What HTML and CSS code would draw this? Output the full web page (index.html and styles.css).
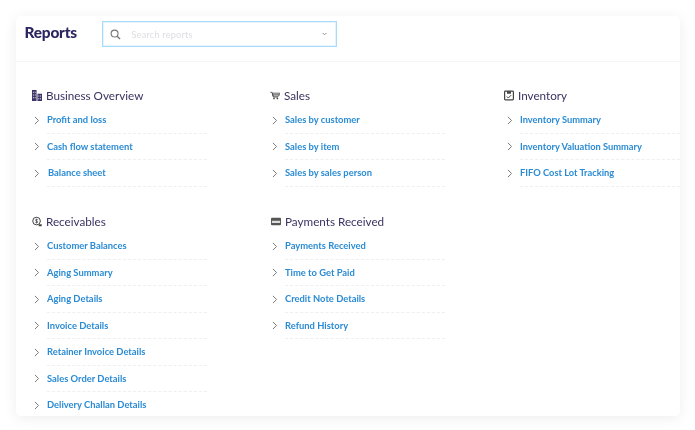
FILE: index.html
```html
<!DOCTYPE html>
<html lang="en">
<head>
<meta charset="utf-8">
<title>Reports</title>
<link rel="stylesheet" href="styles.css">
</head>
<body>
<svg class="defs" width="0" height="0" aria-hidden="true">
  <symbol id="chev" viewBox="0 0 6 10"><path d="M1 1l4 4-4 4" fill="none" stroke="#777" stroke-width="1.1"/></symbol>
</svg>
<main class="card">
  <header class="top">
    <h1 class="title">Reports</h1>
    <div class="search">
      <svg class="search-icon" viewBox="0 0 12 12"><circle cx="5" cy="5" r="3.8" fill="none" stroke="#777" stroke-width="1.2"/><path d="M7.8 7.8L11 11" stroke="#777" stroke-width="1.5"/></svg>
      <span class="placeholder">Search reports</span>
      <svg class="caret" viewBox="0 0 6 4"><path d="M.7.7L3 3l2.3-2.3" fill="none" stroke="#888" stroke-width="1.1"/></svg>
    </div>
  </header>
  <div class="grid">
    <section class="group">
      <h2 class="head">
        <svg class="ico" viewBox="0 0 11 12"><path fill="#3c3566" d="M0 0h5v12H0zM6 4h5v8H6z"/><path fill="#fff" d="M1 2h1v1H1zM3 2h1v1H3zM1 5h1v1H1zM3 5h1v1H3zM1 8h1v1H1zM3 8h1v1H3zM7 6h1v1H7zM9 6h1v1H9zM7 9h1v1H7zM9 9h1v1H9z"/></svg>
        Business Overview
      </h2>
      <ul class="rows">
        <li class="row"><svg class="chev"><use href="#chev"/></svg><a class="link">Profit and loss</a></li>
        <li class="row"><svg class="chev"><use href="#chev"/></svg><a class="link">Cash flow statement</a></li>
        <li class="row"><svg class="chev"><use href="#chev"/></svg><a class="link link-shift">Balance sheet</a></li>
      </ul>
    </section>
    <section class="group">
      <h2 class="head">
        <svg class="ico" viewBox="0 0 12 10"><path d="M.5 1.2h2l1.4 5.6h5.7" fill="none" stroke="#444" stroke-width="1"/><path d="M2.8 2.2h8.7l-.9 3.4H3.6z" fill="none" stroke="#444" stroke-width="1"/><path d="M3.4 3.9h7.5" stroke="#444" stroke-width=".8"/><circle cx="4.8" cy="8.5" r="1" fill="#444"/><circle cx="8.9" cy="8.5" r="1" fill="#444"/></svg>
        Sales
      </h2>
      <ul class="rows">
        <li class="row"><svg class="chev"><use href="#chev"/></svg><a class="link">Sales by customer</a></li>
        <li class="row"><svg class="chev"><use href="#chev"/></svg><a class="link">Sales by item</a></li>
        <li class="row"><svg class="chev"><use href="#chev"/></svg><a class="link">Sales by sales person</a></li>
      </ul>
    </section>
    <section class="group group-last">
      <h2 class="head">
        <svg class="ico" viewBox="0 0 10 10"><rect x=".6" y=".6" width="8.8" height="8.8" rx=".8" fill="none" stroke="#444" stroke-width="1.2"/><path d="M3 .8h4v2.4H3z" fill="#444"/><path d="M2.8 6l1.5 1.5 2.9-2.9" fill="none" stroke="#444" stroke-width="1"/></svg>
        Inventory
      </h2>
      <ul class="rows">
        <li class="row"><svg class="chev"><use href="#chev"/></svg><a class="link">Inventory Summary</a></li>
        <li class="row"><svg class="chev"><use href="#chev"/></svg><a class="link">Inventory Valuation Summary</a></li>
        <li class="row"><svg class="chev"><use href="#chev"/></svg><a class="link">FIFO Cost Lot Tracking</a></li>
      </ul>
    </section>
    <section class="group">
      <h2 class="head">
        <svg class="ico" viewBox="0 0 11 11"><circle cx="5" cy="5" r="4.2" fill="none" stroke="#444" stroke-width="1.1"/><path d="M5 2.4v5.2M6.4 3.6C5.6 3 3.8 3.1 3.8 4.1c0 1.3 2.6.6 2.6 1.9 0 1-1.9 1-2.8.4" fill="none" stroke="#444" stroke-width=".8"/><path d="M7.3 8.6h3.4v2H7.3z" fill="#444"/></svg>
        Receivables
      </h2>
      <ul class="rows">
        <li class="row"><svg class="chev"><use href="#chev"/></svg><a class="link">Customer Balances</a></li>
        <li class="row"><svg class="chev"><use href="#chev"/></svg><a class="link">Aging Summary</a></li>
        <li class="row"><svg class="chev"><use href="#chev"/></svg><a class="link">Aging Details</a></li>
        <li class="row"><svg class="chev"><use href="#chev"/></svg><a class="link">Invoice Details</a></li>
        <li class="row"><svg class="chev"><use href="#chev"/></svg><a class="link">Retainer Invoice Details</a></li>
        <li class="row"><svg class="chev"><use href="#chev"/></svg><a class="link">Sales Order Details</a></li>
        <li class="row"><svg class="chev"><use href="#chev"/></svg><a class="link">Delivery Challan Details</a></li>
      </ul>
    </section>
    <section class="group">
      <h2 class="head head-wide">
        <svg class="ico" viewBox="0 0 11 8"><rect width="11" height="8" rx="1" fill="#555"/><path d="M1 3.2h9v2.4H1z" fill="#ddd"/></svg>
        Payments Received
      </h2>
      <ul class="rows">
        <li class="row"><svg class="chev"><use href="#chev"/></svg><a class="link">Payments Received</a></li>
        <li class="row"><svg class="chev"><use href="#chev"/></svg><a class="link">Time to Get Paid</a></li>
        <li class="row"><svg class="chev"><use href="#chev"/></svg><a class="link">Credit Note Details</a></li>
        <li class="row"><svg class="chev"><use href="#chev"/></svg><a class="link">Refund History</a></li>
      </ul>
    </section>
  </div>
</main>
</body>
</html>
```
FILE: styles.css
```css
* { box-sizing: border-box; }
html, body { margin: 0; background: #fff; }
body { width: 695px; height: 430px; padding: 16px 15px 14px 16px; overflow: hidden; font-family: Lato, "Open Sans", sans-serif; }
.defs { position: absolute; }
.card { width: 664px; height: 400px; background: #fff; border-radius: 5px; box-shadow: 0 2px 14px rgba(0,0,0,.075); overflow: hidden; filter: blur(.3px); }
.top { height: 46px; display: flex; align-items: flex-start; border-bottom: 1px solid #f5f5f6; }
.title { margin: 7px 0 0 8.5px; width: 77.5px; font-size: 15.4px; line-height: 19px; font-weight: 900; color: #2b2560; letter-spacing: -.2px; }
.search { width: 235px; height: 26px; margin-top: 5px; display: flex; align-items: center; border: 1px solid #a9dcfb; box-shadow: inset 0 0 0 .5px #cbe9fc; padding: 0 9px 0 7px; }
.search-icon { width: 11px; height: 11px; flex: none; }
.placeholder { margin-left: 10.5px; flex: 1; font-size: 9.2px; color: #dcdde0; letter-spacing: .2px; }
.caret { width: 5px; height: 4px; flex: none; }
.grid { display: grid; grid-template-columns: 238px 234px 160px; padding: 23px 0 0 16px; row-gap: 24.5px; align-items: start; }
.head { height: 20px; margin: 0; display: flex; align-items: center; gap: 4px; font-size: 11.7px; font-weight: 400; color: #3a3362; }
.head-wide { gap: 4px; }
.head-wide .ico { margin-left: 1px; }
.ico { width: 10px; height: 11px; flex: none; }
.rows { list-style: none; margin: 2px 0 0; padding: 0; }
.row { height: 26.5px; margin-left: 15px; width: 160px; display: flex; align-items: center; position: relative; border-bottom: 1px dashed #efeff1; }
.chev { position: absolute; left: -13px; top: 8.5px; width: 5.5px; height: 9px; }
.link { font-size: 9.4px; font-weight: 700; color: #2a8bd4; }
.link-shift { margin-left: 1px; }
.group-last .row { margin-left: 16px; }
.group-last .link { font-size: 9.3px; }
```
